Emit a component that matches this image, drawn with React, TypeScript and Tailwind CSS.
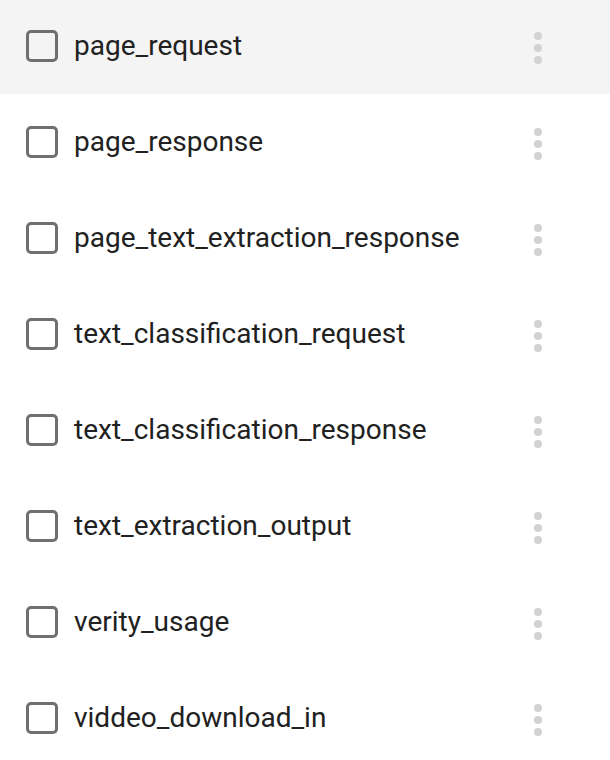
const items = [
  "page_request",
  "page_response",
  "page_text_extraction_response",
  "text_classification_request",
  "text_classification_response",
  "text_extraction_output",
  "verity_usage",
  "viddeo_download_in",
];

function MoreDots() {
  return (
    <div className="flex flex-col items-center gap-1 mt-1">
      <span className="w-2 h-2 rounded-full bg-[#d2d2d2]" />
      <span className="w-2 h-2 rounded-full bg-[#d2d2d2]" />
      <span className="w-2 h-2 rounded-full bg-[#d2d2d2]" />
    </div>
  );
}

export default function App() {
  return (
    <div className="w-[610px] h-[760px] overflow-hidden bg-white font-['Roboto',sans-serif]">
      <ul className="-mt-[2px]">
        {items.map((name, i) => (
          <li
            key={name}
            className={`flex items-center h-[96px] pl-[26px] pr-[68px] ${i === 0 ? "bg-[#f4f4f4]" : ""}`}
          >
            <span className="w-8 h-8 rounded-[5px] border-[3px] border-[#6f6f6f] shrink-0" />
            <span className="ml-4 text-[28px] text-[#212121] leading-none">{name}</span>
            <span className="ml-auto">
              <MoreDots />
            </span>
          </li>
        ))}
      </ul>
    </div>
  );
}
